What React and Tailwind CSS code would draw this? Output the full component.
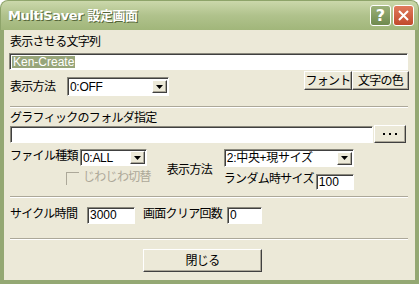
const field = "bg-white border border-t-[#8a887c] border-l-[#8a887c] border-b-white border-r-white shadow-[inset_1px_1px_0_#404040]";
const raised = "bg-[#ece9d8] border border-t-white border-l-white border-b-[#404040] border-r-[#404040] shadow-[inset_-1px_-1px_0_#aca899]";
const label = "leading-[14px] tracking-[-0.7px] whitespace-nowrap";

function Combo({ className, value }) {
  return (
    <div className={`${field} ${className} flex items-center justify-between pl-[2px] pr-[1px]`}>
      <span className="leading-[14px] whitespace-nowrap tracking-[-0.3px]">{value}</span>
      <div className={`${raised} w-[15px] h-[13px] flex items-center justify-center`}>
        <svg width="7" height="4" viewBox="0 0 7 4">
          <path d="M0 0h7L3.5 4z" fill="#000" />
        </svg>
      </div>
    </div>
  );
}

function Separator() {
  return <div className="ml-[1px] mr-[2px] h-[2px] border-t border-t-[#aca899] border-b border-b-white" />;
}

export default function App() {
  return (
    <div className="w-[419px] h-[284px] flex flex-col font-['Liberation_Sans','Noto_Sans_CJK_JP',sans-serif] text-black">
      <div className="h-[30px] rounded-t-[8px] bg-gradient-to-b from-[#cbd8ab] via-[#b0c28c] to-[#a1b67a] border border-b-0 border-[#8ea46a] flex items-center pl-[7px] pr-[4px]">
        <span className="text-white font-bold text-[13px] leading-[16px] [text-shadow:1px_1px_0_#56673a] font-['DejaVu_Sans','Noto_Sans_CJK_JP',sans-serif] tracking-[-0.4px]">
          MultiSaver 設定画面
        </span>
        <div className="ml-auto flex gap-[2px]">
          <div className="w-[21px] h-[21px] rounded-[3px] border border-white bg-gradient-to-b from-[#9cb17a] to-[#6f8a4e] flex items-center justify-center text-white font-bold text-[16px] leading-none font-['DejaVu_Sans',sans-serif]">
            ?
          </div>
          <div className="w-[21px] h-[21px] rounded-[3px] border border-white bg-gradient-to-b from-[#e07a5c] to-[#c14a2c] flex items-center justify-center">
            <svg width="11" height="11" viewBox="0 0 11 11">
              <path d="M1 1L10 10M10 1L1 10" stroke="#fff" strokeWidth="2" />
            </svg>
          </div>
        </div>
      </div>

      <div className="flex-1 flex flex-col bg-[#ece9d8] border-x-4 border-b-4 border-[#94a873] px-[5px] text-[12px]">
        <div className={`${label} mt-[5px] ml-[1px]`}>表示させる文字列</div>
        <div className={`${field} mt-[4px] h-[17px] w-[399px] flex items-center pl-[2px]`}>
          <span className="bg-[#97a57a] text-white leading-[12px] px-[1px]">Ken-Create</span>
        </div>

        <div className="mt-[1px] flex items-start">
          <div className="mt-[6px] flex items-center">
            <span className={`${label} ml-[1px] w-[57px]`}>表示方法</span>
            <Combo className="w-[102px] h-[19px]" value="0:OFF" />
          </div>
          <div className="ml-auto mr-[1px] flex">
            <button className={`${raised} w-[48px] h-[19px] ${label}`}>フォント</button>
            <button className={`${raised} w-[57px] h-[19px] ${label}`}>文字の色</button>
          </div>
        </div>

        <div className="mt-[10px]">
          <Separator />
        </div>

        <div className={`${label} mt-[3px] ml-[1px]`}>グラフィックのフォルダ指定</div>
        <div className="flex items-start">
          <div className={`${field} mt-[1px] ml-[1px] h-[17px] w-[363px]`} />
          <button className={`${raised} ml-[1px] w-[32px] h-[18px] flex items-center justify-center gap-[4px]`}>
            <span className="w-[2px] h-[2px] bg-black" />
            <span className="w-[2px] h-[2px] bg-black" />
            <span className="w-[2px] h-[2px] bg-black" />
          </button>
        </div>

        <div className="mt-[6px] flex items-start">
          <div className="flex flex-col">
            <div className="flex items-start">
              <span className={`${label} ml-[1px] w-[70px]`}>ファイル種類</span>
              <Combo className="w-[67px] h-[17px]" value="0:ALL" />
            </div>
            <div className="mt-[6px] flex items-start">
              <div className="ml-[57px] w-[13px] h-[13px] border-t border-l border-[#aca899]" />
              <span className={`${label} ml-[4px] -mt-[2px] text-[#aca899]`}>じわじわ切替</span>
            </div>
          </div>
          <span className={`${label} ml-[16px] mt-[14px] w-[57px]`}>表示方法</span>
          <div className="flex flex-col">
            <Combo className="w-[130px] h-[18px]" value="2:中央+現サイズ" />
            <div className="mt-[5px] flex items-start">
              <span className={`${label} w-[92px]`}>ランダム時サイズ</span>
              <div className={`${field} mt-[2px] w-[38px] h-[16px] pl-[2px] leading-[14px]`}>100</div>
            </div>
          </div>
        </div>

        <div className="mt-[6px]">
          <Separator />
        </div>

        <div className="mt-[9px] flex items-start">
          <span className={`${label} ml-[1px] w-[77px]`}>サイクル時間</span>
          <div className={`${field} w-[48px] h-[17px] pl-[2px] leading-[15px]`}>3000</div>
          <span className={`${label} ml-[8px] w-[84px]`}>画面クリア回数</span>
          <div className={`${field} w-[35px] h-[17px] pl-[2px] leading-[15px]`}>0</div>
        </div>

        <div className="mt-[14px]">
          <Separator />
        </div>

        <button className={`${raised} mt-[9px] ml-[134px] w-[119px] h-[23px] ${label}`}>閉じる</button>
      </div>
    </div>
  );
}
